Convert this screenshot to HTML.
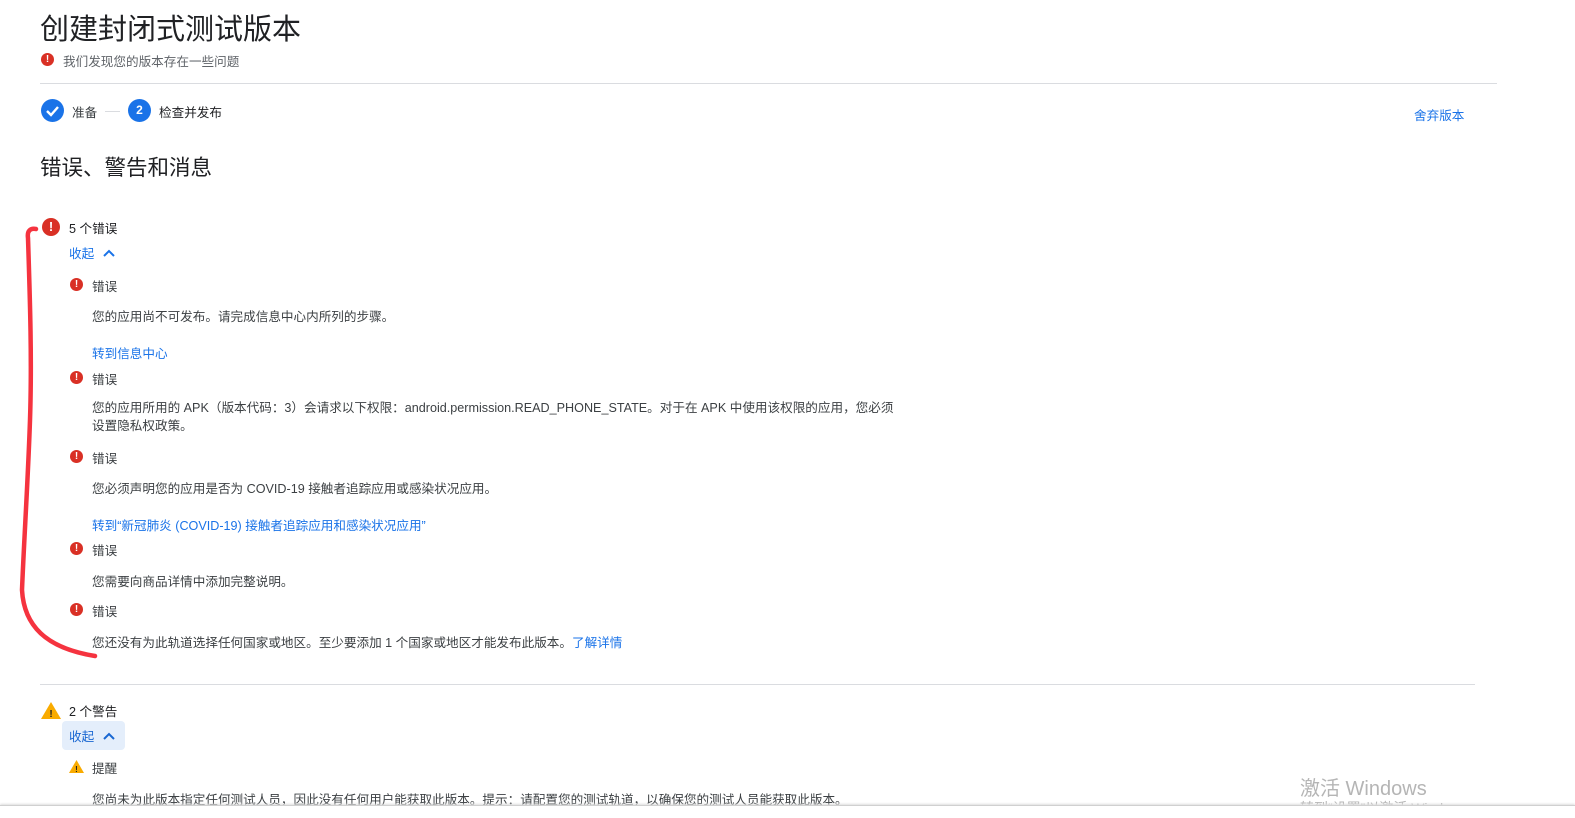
<!DOCTYPE html>
<html><head><meta charset="utf-8"><style>
body{margin:0;width:1575px;height:817px;background:#fff;position:relative;overflow:hidden;font-family:"Liberation Sans","Noto Sans CJK SC",sans-serif;color:#202124}
.a{position:absolute;white-space:nowrap}
.s{font-size:12.6px;color:#3c4043}
.l{color:#1a73e8;font-size:12.6px}
.ic{position:absolute;width:13px;height:13px;border-radius:50%;background:#d93025;color:#fff;font-size:10px;font-weight:bold;text-align:center;line-height:13px}
</style></head><body>
<div class="a" style="left:40px;top:6px;font-size:29px;color:#202124">创建封闭式测试版本</div>
<div class="ic" style="left:41px;top:53px">!</div>
<div class="a s" style="left:63px;top:51px;color:#5f6368">我们发现您的版本存在一些问题</div>
<div class="a" style="left:40px;top:83px;width:1457px;height:1px;background:#dadce0"></div>
<div class="a" style="left:41px;top:99px;width:23px;height:23px;border-radius:50%;background:#1a73e8"><svg width="23" height="23"><path d="M6 12l4 4 7-8" stroke="#fff" stroke-width="2.4" fill="none"/></svg></div>
<div class="a s" style="left:72px;top:102px">准备</div>
<div class="a" style="left:105px;top:111px;width:15px;height:1px;background:#dadce0"></div>
<div class="a" style="left:128px;top:99px;width:23px;height:23px;border-radius:50%;background:#1a73e8;color:#fff;font-size:12px;font-weight:bold;text-align:center;line-height:23px">2</div>
<div class="a s" style="left:159px;top:102px;color:#202124">检查并发布</div>
<div class="a l" style="left:1414px;top:105px">舍弃版本</div>
<div class="a" style="left:40px;top:151px;font-size:21.5px">错误、警告和消息</div>
<div class="ic" style="left:42px;top:218px;width:18px;height:18px;line-height:18px;font-size:13px">!</div>
<div class="a" style="left:69px;top:218px;font-size:12.6px">5 个错误</div>
<div class="a l" style="left:69px;top:243px">收起 <svg width="14" height="10" style="margin-left:4px"><path d="M2 8l5-5 5 5" stroke="#1a73e8" stroke-width="2" fill="none"/></svg></div>

<div class="ic" style="left:70px;top:278px">!</div><div class="a s" style="left:92px;top:276px">错误</div>
<div class="a s" style="left:92px;top:306px">您的应用尚不可发布。请完成信息中心内所列的步骤。</div>
<div class="a l" style="left:92px;top:343px">转到信息中心</div>
<div class="ic" style="left:70px;top:371px">!</div><div class="a s" style="left:92px;top:369px">错误</div>
<div class="a s" style="left:92px;top:399px;line-height:18px">您的应用所用的 APK（版本代码：3）会请求以下权限：android.permission.READ_PHONE_STATE。对于在 APK 中使用该权限的应用，您必须<br>设置隐私权政策。</div>
<div class="ic" style="left:70px;top:450px">!</div><div class="a s" style="left:92px;top:448px">错误</div>
<div class="a s" style="left:92px;top:478px">您必须声明您的应用是否为 COVID-19 接触者追踪应用或感染状况应用。</div>
<div class="a l" style="left:92px;top:515px">转到“新冠肺炎 (COVID-19) 接触者追踪应用和感染状况应用”</div>
<div class="ic" style="left:70px;top:542px">!</div><div class="a s" style="left:92px;top:540px">错误</div>
<div class="a s" style="left:92px;top:571px">您需要向商品详情中添加完整说明。</div>
<div class="ic" style="left:70px;top:603px">!</div><div class="a s" style="left:92px;top:601px">错误</div>
<div class="a s" style="left:92px;top:632px">您还没有为此轨道选择任何国家或地区。至少要添加 1 个国家或地区才能发布此版本。<span style="color:#1a73e8">了解详情</span></div>

<svg class="a" style="left:0;top:0" width="120" height="680"><path d="M36 229C30 228 27 231 28 238C30 300 32 360 30 420C28 480 24 540 22 590C24 625 45 648 95 656" stroke="#f5333f" stroke-width="4.5" fill="none" stroke-linecap="round"/></svg>

<div class="a" style="left:40px;top:684px;width:1435px;height:1px;background:#dadce0"></div>
<svg class="a" style="left:40px;top:701px" width="22" height="19"><path d="M11 1L21 18H1z" fill="#f9ab00"/><text x="11" y="16" font-size="10" font-weight="bold" text-anchor="middle" fill="#202124" font-family="Liberation Sans">!</text></svg>
<div class="a" style="left:69px;top:701px;font-size:12.6px">2 个警告</div>
<div class="a" style="left:62px;top:721px;width:63px;height:29px;background:#e4eefb;border-radius:4px"></div>
<div class="a l" style="left:69px;top:726px;color:#1967d2">收起 <svg width="14" height="10" style="margin-left:4px"><path d="M2 8l5-5 5 5" stroke="#1967d2" stroke-width="2" fill="none"/></svg></div>
<svg class="a" style="left:69px;top:760px" width="15" height="13"><path d="M7.5 0L15 13H0z" fill="#f9ab00"/><text x="7.5" y="12" font-size="8" font-weight="bold" text-anchor="middle" fill="#202124" font-family="Liberation Sans">!</text></svg>
<div class="a s" style="left:92px;top:758px">提醒</div>
<div class="a s" style="left:92px;top:789px">您尚未为此版本指定任何测试人员，因此没有任何用户能获取此版本。提示：请配置您的测试轨道，以确保您的测试人员能获取此版本。</div>
<div class="a" style="left:1300px;top:772px;font-size:20px;color:#b5b5b5">激活 Windows</div>
<div class="a" style="left:1300px;top:798px;font-size:14px;color:#b5b5b5">转到“设置”以激活 Windows。</div>
<div class="a" style="left:0;top:805px;width:1575px;height:12px;background:#fff;border-top:1px solid #d0d0d0;box-shadow:0 -1px 2px #ddd"></div>
</body></html>
